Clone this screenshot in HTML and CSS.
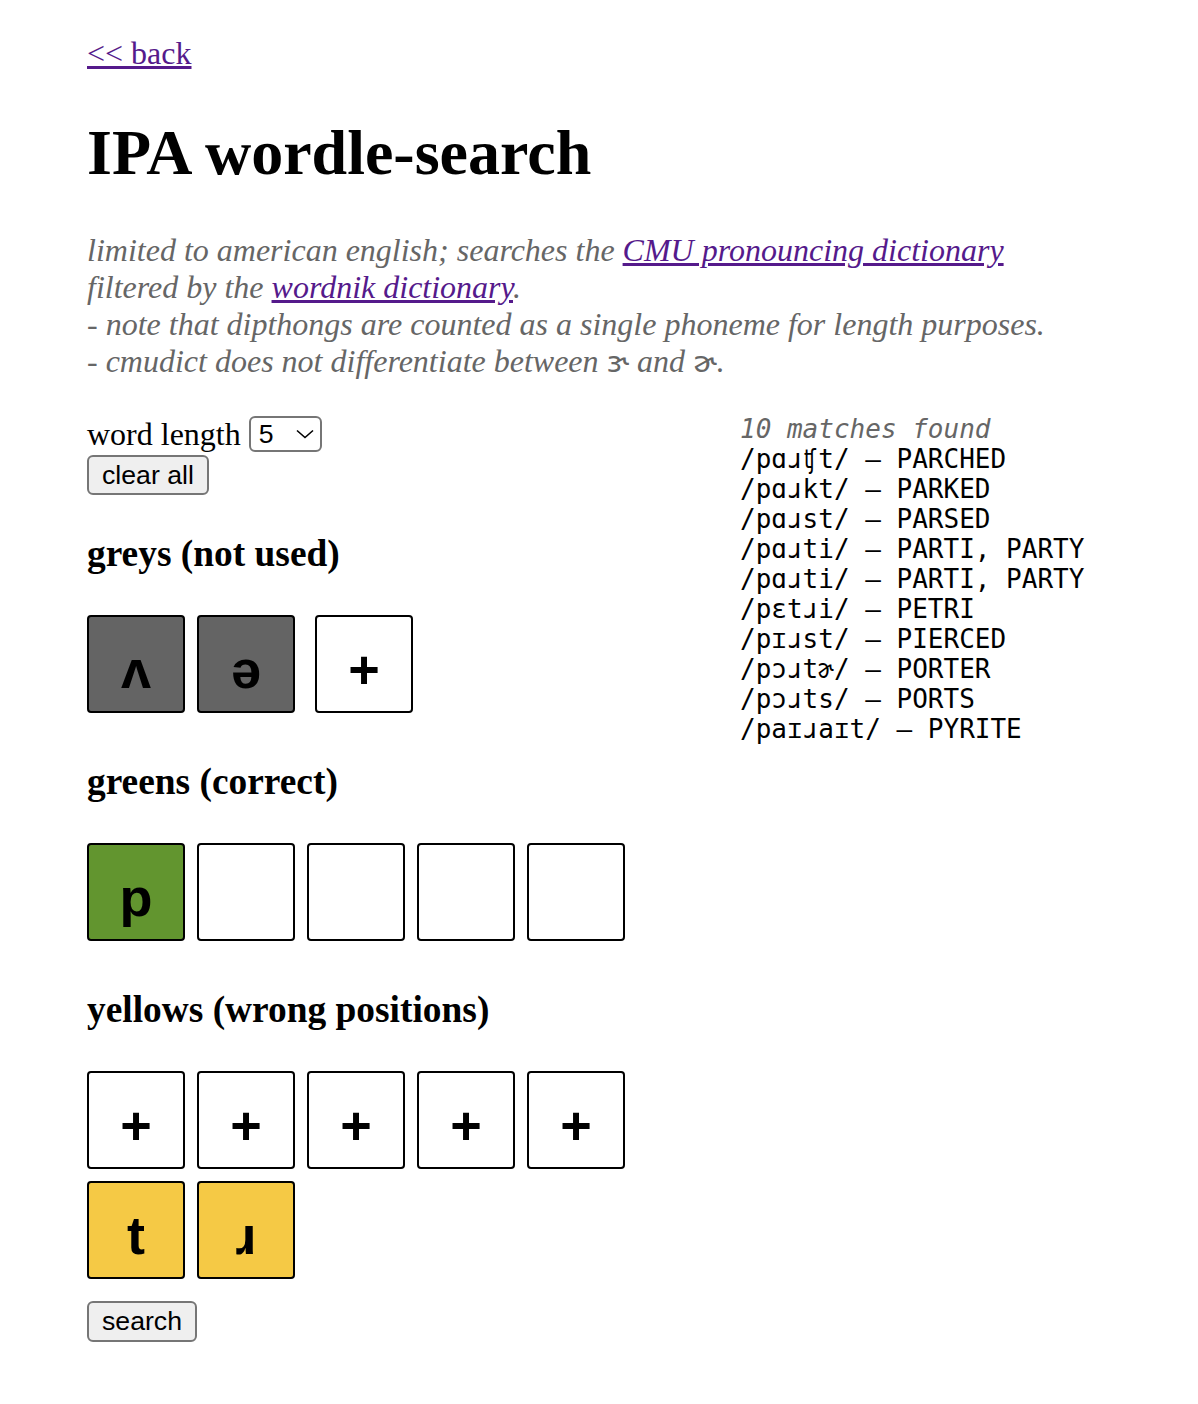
FILE: index.html
```html
<!DOCTYPE html>
<html lang="en">
<head>
<meta charset="utf-8">
<title>IPA wordle-search</title>
<link rel="stylesheet" href="styles.css">
</head>
<body>
<div class="nav"><a href="#">&lt;&lt; back</a></div>
<h1 class="title">IPA wordle-search</h1>
<p class="note">limited to american english; searches the <a href="#">CMU pronouncing dictionary</a><br>filtered by the <a href="#">wordnik dictionary</a>.<br>- note that dipthongs are counted as a single phoneme for length purposes.<br>- cmudict does not differentiate between <span class="ipa">ɝ</span> and <span class="ipa">ɚ</span>.</p>
<div class="main">
  <div class="controls">
    <div class="len-row">
      <label class="len-label" for="len">word length</label>
      <select class="len" id="len"><option>5</option></select>
    </div>
    <button class="btn clear">clear all</button>

    <h3 class="section-title">greys (not used)</h3>
    <div class="tiles">
      <button class="tile grey">ʌ</button>
      <button class="tile grey">ə</button>
      <button class="tile add-gap">+</button>
    </div>

    <h3 class="section-title">greens (correct)</h3>
    <div class="tiles">
      <button class="tile green">p</button>
      <button class="tile"></button>
      <button class="tile"></button>
      <button class="tile"></button>
      <button class="tile"></button>
    </div>

    <h3 class="section-title">yellows (wrong positions)</h3>
    <div class="tiles">
      <button class="tile">+</button>
      <button class="tile">+</button>
      <button class="tile">+</button>
      <button class="tile">+</button>
      <button class="tile">+</button>
      <button class="tile yellow">t</button>
      <button class="tile yellow">ɹ</button>
    </div>

    <button class="btn search">search</button>
  </div>

  <div class="results">
    <div class="count">10 matches found</div>
    <div>/pɑɹʧt/ – PARCHED</div>
    <div>/pɑɹkt/ – PARKED</div>
    <div>/pɑɹst/ – PARSED</div>
    <div>/pɑɹti/ – PARTI, PARTY</div>
    <div>/pɑɹti/ – PARTI, PARTY</div>
    <div>/pɛtɹi/ – PETRI</div>
    <div>/pɪɹst/ – PIERCED</div>
    <div>/pɔɹtɚ/ – PORTER</div>
    <div>/pɔɹts/ – PORTS</div>
    <div>/paɪɹaɪt/ – PYRITE</div>
  </div>
</div>
</body>
</html>
```

FILE: styles.css
```css
html, body {
  margin: 0;
  padding: 0;
  background: #fff;
}

body {
  font-family: "Liberation Serif", "Times New Roman", serif;
  font-size: 32px;
  line-height: 37px;
  color: #000;
  padding: 35px 87px 60px;
}

a {
  color: #551a8b;
  text-decoration: underline;
}

.nav {
  margin: 0;
}

.title {
  font-size: 64px;
  line-height: 74px;
  font-weight: bold;
  margin: 44px 0 42px;
}

.note {
  margin: 0 0 34px;
  font-style: italic;
  color: #666;
}

.ipa {
  font-style: normal;
  font-family: "DejaVu Sans", sans-serif;
  font-size: 29px;
}

.main {
  display: grid;
  grid-template-columns: 653px 1fr;
  align-items: start;
}

.len-row {
  display: flex;
  align-items: center;
  gap: 8px;
  height: 38px;
}

.len {
  appearance: none;
  -webkit-appearance: none;
  box-sizing: border-box;
  width: 73px;
  height: 36px;
  border: 2px solid #767676;
  border-radius: 6px;
  background: #fff url("data:image/svg+xml,%3Csvg xmlns='http://www.w3.org/2000/svg' width='18' height='10' viewBox='0 0 18 10'%3E%3Cpolyline points='1,1.5 9,8.5 17,1.5' fill='none' stroke='%23000' stroke-width='1.6'/%3E%3C/svg%3E") no-repeat right 6px center / 18px 10px;
  font: 26.67px "Liberation Sans", Arial, sans-serif;
  color: #000;
  padding: 0 0 0 8px;
  margin: 0;
}

.btn {
  display: block;
  box-sizing: border-box;
  font: 26.67px/1.15 "Liberation Sans", Arial, sans-serif;
  background: #efefef;
  color: #000;
  border: 2px solid #767676;
  border-radius: 6px;
  padding: 2px 13px;
  margin: 0;
}

.clear {
  margin-top: 2px;
  height: 40px;
}

.search {
  margin-top: 12px;
  height: 41px;
}

.section-title {
  font-size: 37.4px;
  line-height: 43px;
  font-weight: bold;
  margin: 37px 0;
}

.tiles {
  display: flex;
  flex-wrap: wrap;
  gap: 12px;
  max-width: 540px;
  padding: 3px 0 10px;
}

.tile {
  box-sizing: border-box;
  width: 98px;
  height: 98px;
  border: 2px solid #000;
  border-radius: 4px;
  background: #fff;
  color: #000;
  font: bold 54px/1 "Liberation Sans", Arial, sans-serif;
  display: flex;
  align-items: center;
  justify-content: center;
  padding: 10px 0 0;
  margin: 0;
}

.grey {
  background: #646464;
}

.green {
  background: #62952f;
}

.yellow {
  background: #f5c945;
}

.add-gap {
  margin-left: 8px;
}

.results {
  font-family: "DejaVu Sans Mono", Menlo, monospace;
  font-size: 26px;
  line-height: 30px;
  white-space: nowrap;
  margin-top: -1px;
}

.count {
  font-style: italic;
  color: #666;
}
```
